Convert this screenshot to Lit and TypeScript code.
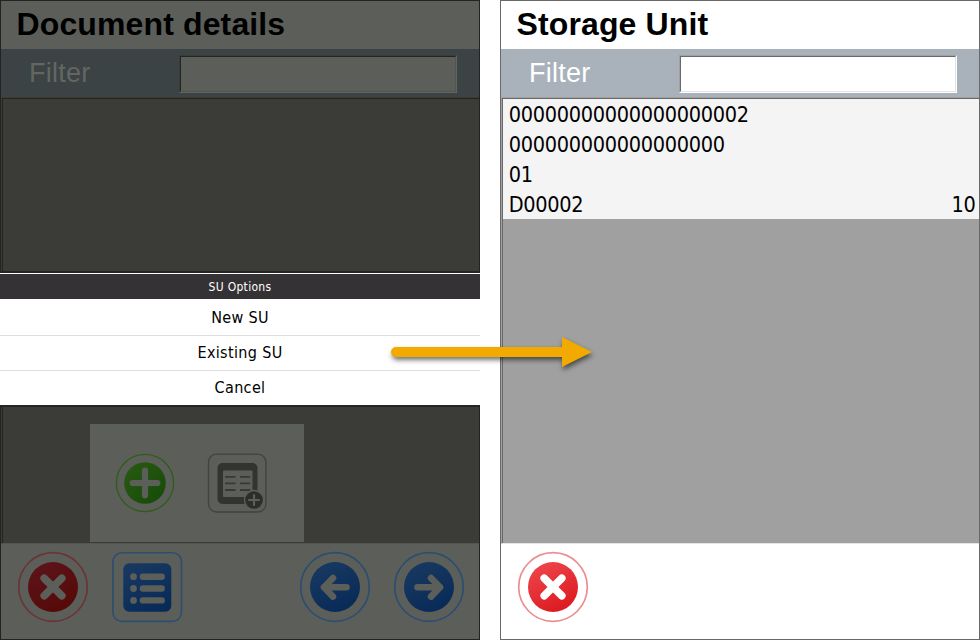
import { LitElement, html, css, svg } from "lit";
import { customElement, property } from "lit/decorators.js";

const cross = svg`<path d="M-8.8 -8.8L8.8 8.8M8.8 -8.8L-8.8 8.8" class="glyph" stroke-width="7.6"/>`;
const arrowLeft = svg`<path d="M-11 0.3H11.5M-2 -9L-11 0.3L-2 9.6" class="glyph" stroke-width="6.6"/>`;
const arrowRight = svg`<path d="M11 0.3H-11.5M2 -9L11 0.3L2 9.6" class="glyph" stroke-width="6.6"/>`;

@customElement("round-button")
export class RoundButton extends LitElement {
  @property() kind = "close";
  @property({ type: Boolean }) dim = false;
  static styles = css`
    :host { display: block; width: 72px; height: 72px; }
    svg { display: block; }
    .glyph { stroke: #fff; stroke-linecap: round; stroke-linejoin: round; fill: none; }
    .solid { fill: #fff; }
    .dim .glyph { stroke: #5c5e59; }
    .dim .solid { fill: #5c5e59; }
  `;
  render() {
    const close = this.kind === "close";
    const ring = close ? (this.dim ? "#6b3435" : "#eb8d91") : "#2c4e70";
    const from = close ? (this.dim ? "#5c141b" : "#ee474c") : "#173961";
    const to = close ? (this.dim ? "#560906" : "#dc181f") : "#082a57";
    return html`<svg class=${this.dim ? "dim" : ""} width="72" height="72" viewBox="-36 -36 72 72">
      <defs><linearGradient id="g" x1="0.2" y1="0" x2="0.7" y2="1">
        <stop offset="0" stop-color=${from}/><stop offset="1" stop-color=${to}/>
      </linearGradient></defs>
      ${this.kind === "list"
        ? svg`<rect x="-34.1" y="-34.2" width="68.6" height="68.6" rx="9" fill="none" stroke=${ring} stroke-width="1.6"/>
          <rect x="-23.7" y="-23.7" width="48" height="48.4" rx="6" fill="url(#g)"/>
          ${[-10.3, 1.5, 13.4].map(y => svg`<circle cx="-13.5" cy=${y} r="3.4" class="solid"/>
            <rect x="-7.3" y=${y - 3.2} width="25.2" height="6.4" rx="3.2" class="solid"/>`)}`
        : svg`<circle r="34.3" fill="none" stroke=${ring} stroke-width="1.7"/>
          <circle r="25" fill="url(#g)"/>
          ${close ? cross : this.kind === "back" ? arrowLeft : arrowRight}`}
    </svg>`;
  }
}

@customElement("device-screen")
export class DeviceScreen extends LitElement {
  @property() heading = "";
  @property({ type: Boolean, reflect: true }) dim = false;
  static styles = css`
    :host {
      --paper: #fff; --edge: #696969; --bar: #a9b2ba; --label: #fff; --body: #a0a0a0;
      --shade: #a0a0a0; --dark: #696969; --soft: #e3e3e3; --light: #fff;
      position: relative; box-sizing: border-box; width: 480px; height: 640px;
      border: 1px solid var(--edge); background: var(--paper);
      display: flex; flex-direction: column; overflow: hidden;
      font-family: "Liberation Sans", Arial, sans-serif;
    }
    :host([dim]) {
      --paper: #5c5e59; --edge: #232421; --bar: #3b4344; --label: #646661; --body: #3b3b38;
      --shade: #3b3b38; --dark: #232522; --soft: #535550; --light: #62645f;
    }
    .title { height: 48px; line-height: 46px; padding-left: 15.5px; font-size: 32px; font-weight: 700; letter-spacing: 0.13px; color: #000; white-space: nowrap; }
    .filter { height: 48px; background: var(--bar); display: flex; justify-content: space-between; padding: 6px 22px 4px 28px; box-sizing: border-box; }
    .label { color: var(--label); font-size: 27px; line-height: 36px; letter-spacing: 0.25px; }
    .field { box-sizing: border-box; width: 278px; height: 38px; border: 1px solid; border-color: var(--shade) var(--light) var(--light) var(--shade); display: flex; }
    .inner { flex: 1; border: 1px solid; border-color: var(--dark) var(--soft) var(--soft) var(--dark); background: var(--paper); }
    .list { box-sizing: border-box; height: 447px; border-top: 1px solid var(--shade); border-left: 1px solid var(--shade); border-bottom: 1px solid var(--soft); display: flex; }
    .content { flex: 1; border-top: 1px solid var(--dark); border-left: 1px solid var(--dark); background: var(--body); }
    .footer { flex: 1; display: flex; align-items: flex-start; gap: 22px; padding: 7px 14px 0 16px; }
  `;
  render() {
    return html`
      <div class="title">${this.heading}</div>
      <div class="filter"><span class="label">Filter</span><div class="field"><div class="inner"></div></div></div>
      <div class="list"><div class="content"><slot></slot></div></div>
      <div class="footer"><slot name="actions"></slot></div>`;
  }
}

@customElement("app-root")
export class AppRoot extends LitElement {
  static styles = css`
    :host { display: block; position: relative; width: 980px; height: 640px; background: #fff; overflow: hidden;
      font-family: "DejaVu Sans Condensed", "DejaVu Sans", sans-serif; font-stretch: condensed; }
    .screens { display: flex; gap: 20px; }
    device-screen { display: flex; flex: none; }
    .push { margin-left: auto; }
    .rows { background: #f4f4f4; color: #000; font-family: "DejaVu Sans Condensed", "DejaVu Sans", sans-serif; font-size: 21.5px; letter-spacing: -0.3px; }
    .row { display: flex; justify-content: space-between; height: 30px; line-height: 31px; padding: 0 3.5px 0 5.7px; }
    .menu { position: absolute; left: 0; top: 271px; width: 480px; box-sizing: border-box;
      border-top: 2px solid #232723; border-bottom: 2px solid #232723; background: #fff; text-align: center; }
    .caption { margin-top: 1px; height: 25px; line-height: 26px; background: #353236; color: #fff; font-size: 12px; letter-spacing: 0.3px; }
    .option { height: 34px; line-height: 33px; border-bottom: 1px solid #dedee0; font-size: 16px; letter-spacing: 0.35px; color: #000; }
    .option.first { height: 36px; line-height: 37px; }
    .option:last-child { border-bottom: 0; }
    .tools { position: absolute; left: 90px; top: 424px; width: 214px; height: 118px; box-sizing: border-box; padding-right: 13px; background: #5c5e59;
      display: flex; align-items: center; justify-content: center; gap: 32px; }
    .tools svg { display: block; }
    .arrow { position: absolute; left: 380px; top: 327px; filter: drop-shadow(1px 3px 2.5px rgba(0, 0, 0, 0.55)); }
  `;
  render() {
    return html`
      <div class="screens">
        <device-screen heading="Document details" dim>
          <round-button slot="actions" kind="close" dim></round-button>
          <round-button slot="actions" kind="list" dim></round-button>
          <round-button slot="actions" kind="back" dim class="push"></round-button>
          <round-button slot="actions" kind="next" dim></round-button>
        </device-screen>
        <device-screen heading="Storage Unit">
          <div class="rows">
            ${[["00000000000000000002", ""], ["000000000000000000", ""], ["01", ""], ["D00002", "10"]].map(
              ([a, b]) => html`<div class="row"><span>${a}</span><span>${b}</span></div>`)}
          </div>
          <round-button slot="actions" kind="close"></round-button>
        </device-screen>
      </div>
      <div class="tools">
        <svg width="60" height="60" viewBox="-30 -30 60 60">
          <defs><linearGradient id="green" x1="0" y1="0" x2="1" y2="1"><stop offset="0" stop-color="#2b5a12"/><stop offset="1" stop-color="#134b08"/></linearGradient></defs>
          <circle r="28.6" fill="none" stroke="#315c17" stroke-width="1.3"/>
          <circle r="20.8" fill="url(#green)"/>
          <path d="M-12.3 0H12.3M0 -12.3V12.3" stroke="#5c5e59" stroke-width="6.2" stroke-linecap="round"/>
        </svg>
        <svg width="60" height="60" viewBox="-30 -30 60 60">
          <rect x="-28.5" y="-28.8" width="57.4" height="57.8" rx="8" fill="none" stroke="#424340" stroke-width="1.3"/>
          <rect x="-19.5" y="-20" width="40" height="41" rx="5" fill="#333432"/>
          <rect x="-14" y="-12.5" width="29.5" height="26.5" rx="1" fill="#5c5e59"/>
          <path d="M-12 -6.2H-1.5M3 -6.2H13.3M-12 0.4H-1.5M3 0.4H13.3M-12 7H-1.5M3 7H13.3" stroke="#383936" stroke-width="1.8"/>
          <circle cx="17" cy="17" r="10.2" fill="#5c5e59"/>
          <circle cx="17" cy="17" r="8.8" fill="#2d2e2c"/>
          <path d="M12 17H22M17 12V22" stroke="#5c5e59" stroke-width="2.2" stroke-linecap="round"/>
        </svg>
      </div>
      <div class="menu">
        <div class="caption">SU Options</div>
        <div class="option first">New SU</div>
        <div class="option">Existing SU</div>
        <div class="option">Cancel</div>
      </div>
      <svg class="arrow" width="230" height="54" viewBox="0 0 230 54">
        <path d="M16 20H182V10L212 25L182 40V30H16A5 5 0 0 1 16 20Z" fill="#f2a900"/>
      </svg>`;
  }
}
